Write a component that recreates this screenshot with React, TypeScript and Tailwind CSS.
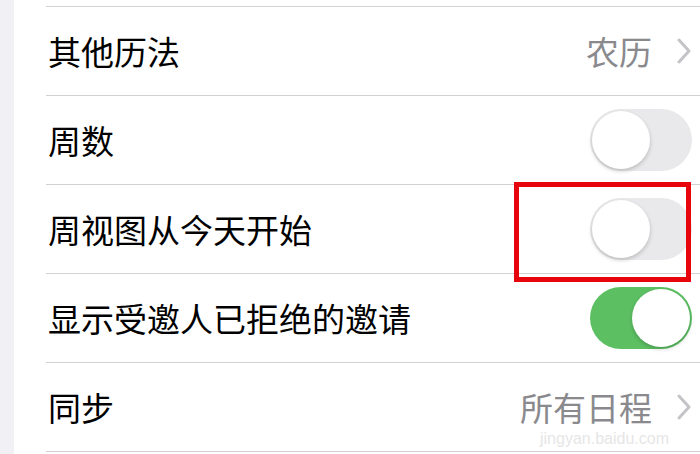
import React from "react";

const font = { fontFamily: '"Noto Sans CJK SC", "Noto Sans", sans-serif' };

function Chevron() {
  return (
    <svg width="16" height="26" viewBox="0 0 16 26" className="ml-[24px]">
      <path d="M3 2 L13 13 L3 24" fill="none" stroke="#c4c4c8" strokeWidth="3" strokeLinecap="round" strokeLinejoin="round" />
    </svg>
  );
}

function Toggle({ on }: { on: boolean }) {
  return (
    <div
      className={`relative w-[102px] h-[62px] rounded-full ${on ? "bg-[#5cc063]" : "bg-[#e9e9eb]"}`}
    >
      <div
        className={`absolute top-[2px] w-[58px] h-[58px] rounded-full bg-white shadow-[0_2px_4px_rgba(0,0,0,0.2)] ${on ? "right-[2px]" : "left-[2px]"}`}
      />
    </div>
  );
}

function Row({ label, children }: { label: string; children?: React.ReactNode }) {
  return (
    <div className="ml-[32px] h-[89px] border-t border-[#d2d2d6] flex items-center justify-between pr-[8px]">
      <span className="text-[33px] text-black leading-none pl-[2px]">{label}</span>
      <div className="flex items-center">{children}</div>
    </div>
  );
}

export default function App() {
  return (
    <div className="w-[700px] h-[454px] flex bg-white overflow-hidden relative" style={font}>
      <div className="w-[14px] bg-[#f1f1f5]" />
      <div className="flex-1 flex flex-col pt-[6px]">
        <Row label="其他历法">
          <span className="text-[33px] leading-none text-[#8a8a8e]">农历</span>
          <Chevron />
        </Row>
        <Row label="周数">
          <Toggle on={false} />
        </Row>
        <Row label="周视图从今天开始">
          <Toggle on={false} />
        </Row>
        <Row label="显示受邀人已拒绝的邀请">
          <Toggle on={true} />
        </Row>
        <Row label="同步">
          <span className="text-[33px] leading-none text-[#8a8a8e]">所有日程</span>
          <Chevron />
        </Row>
        <div className="ml-[32px] border-t border-[#d2d2d6]" />
      </div>
      <div className="absolute left-[514px] top-[182px] w-[177px] h-[100px] border-[5px] border-[#e8040c]" />
      <div className="absolute left-[540px] top-[431px] text-[16px] leading-none text-[#e6e6e6]" style={{ fontFamily: '"Liberation Sans", sans-serif' }}>
        jingyan.baidu.com
      </div>
    </div>
  );
}
